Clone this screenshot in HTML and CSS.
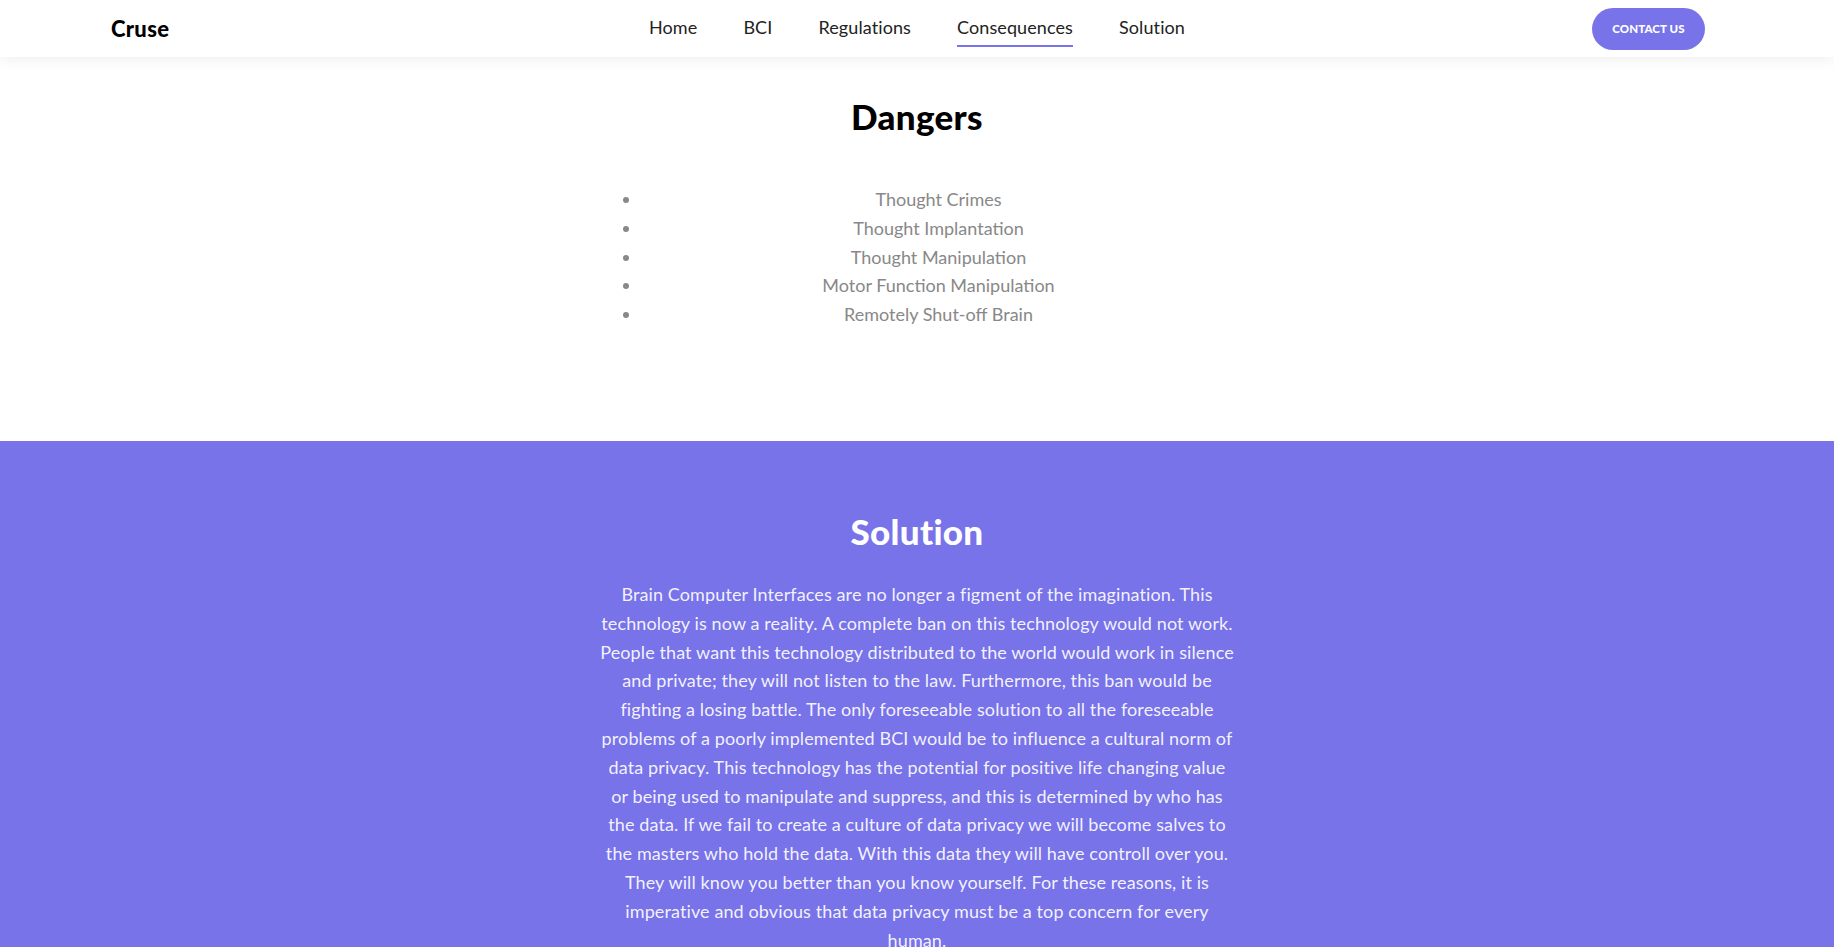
FILE: index.html
```html
<!DOCTYPE html>
<html lang="en">
<head>
<meta charset="utf-8">
<title>Cruse</title>
<link rel="stylesheet" href="styles.css">
</head>
<body>
<header class="topbar">
  <div class="brand">Cruse</div>
  <nav class="menu">
    <a class="menu-link" href="#">Home</a>
    <a class="menu-link" href="#">BCI</a>
    <a class="menu-link" href="#">Regulations</a>
    <a class="menu-link active" href="#">Consequences</a>
    <a class="menu-link" href="#">Solution</a>
  </nav>
  <div class="cta-wrap"><a class="cta" href="#">CONTACT US</a></div>
</header>

<section class="dangers">
  <div class="inner">
    <h2 class="title">Dangers</h2>
    <ul class="danger-list">
      <li>Thought Crimes</li>
      <li>Thought Implantation</li>
      <li>Thought Manipulation</li>
      <li>Motor Function Manipulation</li>
      <li>Remotely Shut-off Brain</li>
    </ul>
  </div>
</section>

<section class="solution">
  <div class="inner">
    <h2 class="title light">Solution</h2>
    <p class="solution-text">Brain Computer Interfaces are no longer a figment of the imagination. This technology is now a reality. A complete ban on this technology would not work. People that want this technology distributed to the world would work in silence and private; they will not listen to the law. Furthermore, this ban would be fighting a losing battle. The only foreseeable solution to all the foreseeable problems of a poorly implemented BCI would be to influence a cultural norm of data privacy. This technology has the potential for positive life changing value or being used to manipulate and suppress, and this is determined by who has the data. If we fail to create a culture of data privacy we will become salves to the masters who hold the data. With this data they will have controll over you. They will know you better than you know yourself. For these reasons, it is imperative and obvious that data privacy must be a top concern for every human.</p>
  </div>
</section>
</body>
</html>
```

FILE: styles.css
```css
* { box-sizing: border-box; }
html, body { margin: 0; padding: 0; }
body {
  font-family: Lato, "Open Sans", sans-serif;
  background: #ffffff;
  color: #222;
}

.topbar {
  height: 57px;
  display: grid;
  grid-template-columns: 1fr auto 1fr;
  align-items: center;
  background: #fff;
  box-shadow: 0 2px 14px rgba(0,0,0,0.07);
  position: relative;
  z-index: 2;
}
.brand {
  padding-left: 111px;
  font-size: 22px;
  font-weight: 900;
  color: #000;
  letter-spacing: 0.3px;
}
.menu {
  display: flex;
  gap: 46px;
  height: 57px;
  align-items: center;
}
.menu-link {
  font-size: 18px;
  letter-spacing: 0.1px;
  color: #222;
  text-decoration: none;
  padding: 5px 0 7px;
  border-bottom: 2px solid transparent;
}
.menu-link.active { border-bottom-color: #7873e9; }
.cta-wrap {
  display: flex;
  justify-content: flex-end;
  padding-right: 129px;
}
.cta {
  display: flex;
  align-items: center;
  justify-content: center;
  width: 113px;
  height: 42px;
  border-radius: 21px;
  background: #7873e9;
  color: #fff;
  font-size: 11.5px;
  font-weight: 900;
  text-decoration: none;
  letter-spacing: 0.1px;
}

.inner {
  width: 636px;
  margin: 0 auto;
}
.dangers {
  padding: 39px 0 112px;
}
.title {
  margin: 0;
  font-size: 35px;
  line-height: 41px;
  font-weight: 900;
  text-align: center;
  color: #000;
  letter-spacing: 0.3px;
}
.title.light { color: #fff; }
.danger-list {
  margin: 48px 0 0;
  padding-left: 43px;
  list-style: disc;
  text-align: center;
  color: #888;
  font-size: 18px;
  line-height: 28.8px;
}
.solution {
  background: #7873e9;
  padding: 70px 0 40px;
}
.solution-text {
  margin: 28px 0 0;
  text-align: center;
  font-size: 18px;
  line-height: 28.8px;
  letter-spacing: 0.11px;
  color: rgba(255,255,255,0.92);
}
```
